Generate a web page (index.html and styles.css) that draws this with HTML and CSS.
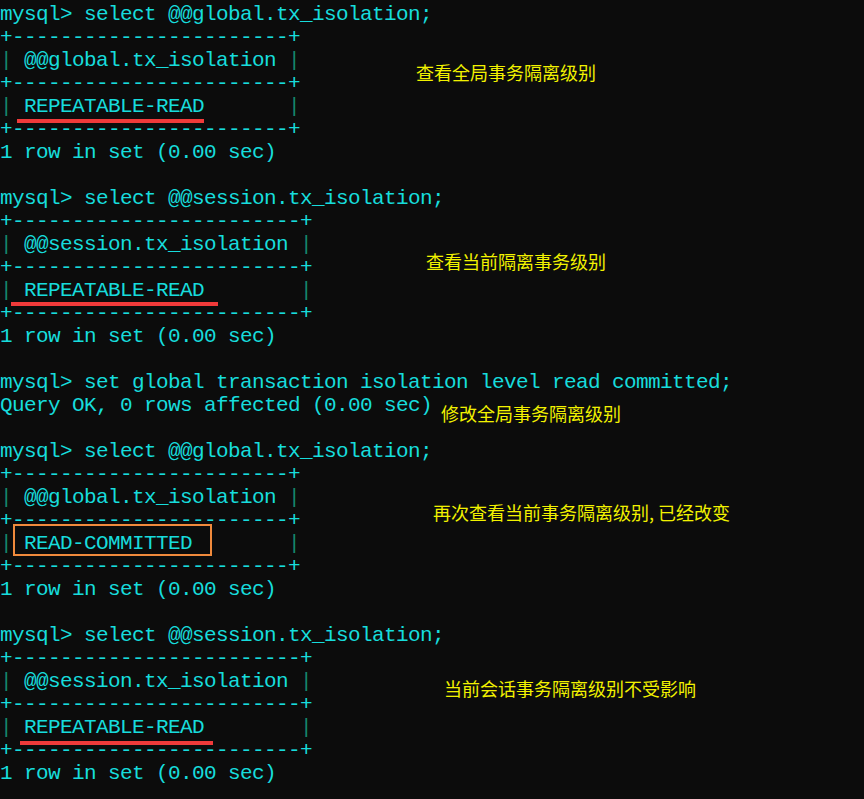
FILE: index.html
```html
<!DOCTYPE html>
<html lang="zh">
<head>
<meta charset="utf-8">
<title>mysql</title>
<link rel="stylesheet" href="styles.css">
</head>
<body>
<div class="screen">
<pre class="term">mysql&gt; select @@global.tx_isolation;
+-----------------------+
<span class="b">|</span> @@global.tx_isolation <span class="b">|</span>
+-----------------------+
<span class="b">|</span> REPEATABLE-READ       <span class="b">|</span>
+-----------------------+
1 row in set (0.00 sec)

mysql&gt; select @@session.tx_isolation;
+------------------------+
<span class="b">|</span> @@session.tx_isolation <span class="b">|</span>
+------------------------+
<span class="b">|</span> REPEATABLE-READ        <span class="b">|</span>
+------------------------+
1 row in set (0.00 sec)

mysql&gt; set global transaction isolation level read committed;
Query OK, 0 rows affected (0.00 sec)

mysql&gt; select @@global.tx_isolation;
+-----------------------+
<span class="b">|</span> @@global.tx_isolation <span class="b">|</span>
+-----------------------+
<span class="b">|</span> READ-COMMITTED        <span class="b">|</span>
+-----------------------+
1 row in set (0.00 sec)

mysql&gt; select @@session.tx_isolation;
+------------------------+
<span class="b">|</span> @@session.tx_isolation <span class="b">|</span>
+------------------------+
<span class="b">|</span> REPEATABLE-READ        <span class="b">|</span>
+------------------------+
1 row in set (0.00 sec)</pre>

<div class="note n1">查看全局事务隔离级别</div>
<div class="note n2">查看当前隔离事务级别</div>
<div class="note n3">修改全局事务隔离级别</div>
<div class="note n4">再次查看当前事务隔离级别, 已经改变</div>
<div class="note n5">当前会话事务隔离级别不受影响</div>

<div class="uline u1"></div>
<div class="uline u2"></div>
<div class="uline u3"></div>
<div class="box"></div>
</div>
</body>
</html>
```

FILE: styles.css
```css
html, body {
  margin: 0;
  padding: 0;
  background: #0c0c0c;
}

.screen {
  position: relative;
  width: 864px;
  height: 799px;
  overflow: hidden;
  background: #0c0c0c;
}

.term {
  margin: 0;
  padding: 3px 0 0 0;
  font-family: "Liberation Mono", "DejaVu Sans Mono", monospace;
  font-size: 21px;
  letter-spacing: -0.6px;
  line-height: 23px;
  color: #17dcdc;
  white-space: pre;
}

.b {
  color: #14866c;
}

.note {
  position: absolute;
  font-family: "Noto Sans CJK SC", "Noto Sans", sans-serif;
  font-size: 18px;
  line-height: 18px;
  color: #f2f200;
  white-space: nowrap;
}

.n1 { left: 416px; top: 63px; }
.n2 { left: 426px; top: 252px; }
.n3 { left: 441px; top: 404px; }
.n4 { left: 433px; top: 503px; }
.n5 { left: 444px; top: 679px; }

.uline {
  position: absolute;
  height: 4px;
  background: #f03a3a;
}

.u1 { left: 17px; top: 119px; width: 187px; }
.u2 { left: 11px; top: 302px; width: 207px; }
.u3 { left: 20px; top: 741px; width: 193px; }

.box {
  position: absolute;
  left: 13px;
  top: 524px;
  width: 195px;
  height: 28px;
  border: 2px solid #f08a3c;
}
```
